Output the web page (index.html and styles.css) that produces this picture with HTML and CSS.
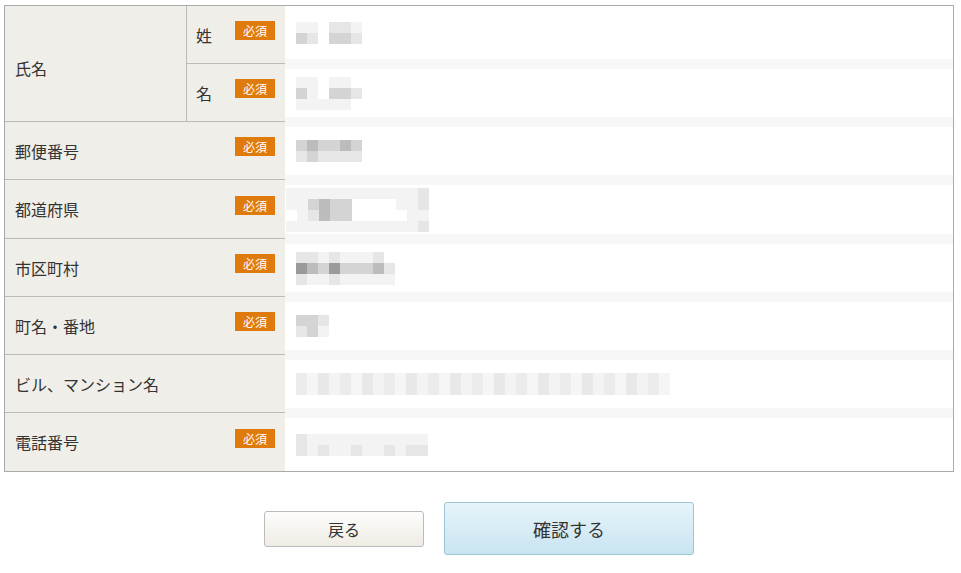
FILE: index.html
```html
<!DOCTYPE html>
<html lang="ja">
<head>
  <meta charset="UTF-8">
  <meta name="viewport" content="width=device-width, initial-scale=1.0">
  <title>お客様情報の入力</title>
  <link rel="stylesheet" href="styles.css">
</head>
<body>
  <div class="form">
    <div class="row row-name">
      <div class="label label-main">氏名</div>
      <div class="sub-rows">
        <div class="sub-row">
          <div class="label label-sub">姓<span class="req">必須</span></div>
          <div class="value first band-bottom">
            <div class="mask cols6">
              <span class="c1"></span><span class="c1"></span><span class="c0"></span><span class="c2"></span><span class="c2"></span><span class="c1"></span>
              <span class="c3"></span><span class="c2"></span><span class="c0"></span><span class="c3"></span><span class="c3"></span><span class="c2"></span>
            </div>
          </div>
        </div>
        <div class="sub-row">
          <div class="label label-sub">名<span class="req">必須</span></div>
          <div class="value band-top band-bottom">
            <div class="mask cols6">
              <span class="c1"></span><span class="c1"></span><span class="c0"></span><span class="c1"></span><span class="c1"></span><span class="c0"></span>
              <span class="c3"></span><span class="c1"></span><span class="c0"></span><span class="c3"></span><span class="c3"></span><span class="c2"></span>
              <span class="c1"></span><span class="c1"></span><span class="c1"></span><span class="c1"></span><span class="c1"></span><span class="c0"></span>
            </div>
          </div>
        </div>
      </div>
    </div>

    <div class="row">
      <div class="label">郵便番号<span class="req">必須</span></div>
      <div class="value band-top band-bottom">
        <div class="mask cols6">
          <span class="c3"></span><span class="c4"></span><span class="c3"></span><span class="c3"></span><span class="c4"></span><span class="c3"></span>
          <span class="c2"></span><span class="c3"></span><span class="c2"></span><span class="c2"></span><span class="c2"></span><span class="c2"></span>
        </div>
      </div>
    </div>

    <div class="row row-tall">
      <div class="label">都道府県<span class="req">必須</span></div>
      <div class="value band-top band-bottom wide">
        <div class="mask cols13">
          <span class="c1"></span><span class="c1"></span><span class="c1"></span><span class="c1"></span><span class="c1"></span><span class="c1"></span><span class="c1"></span><span class="c1"></span><span class="c1"></span><span class="c1"></span><span class="c1"></span><span class="c1"></span><span class="c2"></span>
          <span class="c1"></span><span class="c1"></span><span class="c3"></span><span class="c4"></span><span class="c3"></span><span class="c3"></span><span class="c0"></span><span class="c0"></span><span class="c0"></span><span class="c0"></span><span class="c1"></span><span class="c1"></span><span class="c2"></span>
          <span class="c0"></span><span class="c1"></span><span class="c2"></span><span class="c4"></span><span class="c3"></span><span class="c3"></span><span class="c0"></span><span class="c0"></span><span class="c0"></span><span class="c0"></span><span class="c0"></span><span class="c1"></span><span class="c1"></span>
          <span class="c1"></span><span class="c1"></span><span class="c1"></span><span class="c1"></span><span class="c1"></span><span class="c1"></span><span class="c1"></span><span class="c1"></span><span class="c1"></span><span class="c1"></span><span class="c1"></span><span class="c1"></span><span class="c2"></span>
        </div>
      </div>
    </div>

    <div class="row">
      <div class="label">市区町村<span class="req">必須</span></div>
      <div class="value band-top band-bottom">
        <div class="mask cols9">
          <span class="c2"></span><span class="c2"></span><span class="c1"></span><span class="c2"></span><span class="c1"></span><span class="c1"></span><span class="c1"></span><span class="c2"></span><span class="c0"></span>
          <span class="c5"></span><span class="c4"></span><span class="c3"></span><span class="c5"></span><span class="c3"></span><span class="c3"></span><span class="c3"></span><span class="c4"></span><span class="c2"></span>
          <span class="c2"></span><span class="c1"></span><span class="c1"></span><span class="c2"></span><span class="c1"></span><span class="c1"></span><span class="c1"></span><span class="c1"></span><span class="c1"></span>
        </div>
      </div>
    </div>

    <div class="row">
      <div class="label">町名・番地<span class="req">必須</span></div>
      <div class="value band-top band-bottom">
        <div class="mask cols3">
          <span class="c3"></span><span class="c3"></span><span class="c2"></span>
          <span class="c2"></span><span class="c3"></span><span class="c1"></span>
        </div>
      </div>
    </div>

    <div class="row">
      <div class="label">ビル、マンション名</div>
      <div class="value band-top band-bottom">
        <div class="mask mask-long"></div>
      </div>
    </div>

    <div class="row last">
      <div class="label">電話番号<span class="req">必須</span></div>
      <div class="value band-top">
        <div class="mask cols12">
          <span class="c2"></span><span class="c1"></span><span class="c1"></span><span class="c1"></span><span class="c1"></span><span class="c1"></span><span class="c1"></span><span class="c1"></span><span class="c1"></span><span class="c1"></span><span class="c1"></span><span class="c1"></span>
          <span class="c2"></span><span class="c1"></span><span class="c2"></span><span class="c1"></span><span class="c1"></span><span class="c2"></span><span class="c1"></span><span class="c1"></span><span class="c2"></span><span class="c1"></span><span class="c2"></span><span class="c2"></span>
        </div>
      </div>
    </div>
  </div>

  <div class="actions">
    <button class="btn btn-back">戻る</button>
    <button class="btn btn-confirm">確認する</button>
  </div>
</body>
</html>
```

FILE: styles.css
```css
body { margin: 0; padding: 5px 0 0 4px; font-family: "Noto Sans CJK JP", "Liberation Sans", sans-serif; color: #333; background: #fff; }

.form { width: 950px; box-sizing: border-box; border: 1px solid #aaa; }
.row { display: flex; height: 58px; }
.row-name { height: 116px; }
.row-tall { height: 59px; }

.label { width: 280px; box-sizing: border-box; display: flex; align-items: center; justify-content: space-between; padding: 0 10px; background: #f0eee8; border-bottom: 1px solid #bbb; font-size: 16px; }
.row.last > .label { border-bottom: none; }
.label-main { width: 182px; border-right: 1px solid #bbb; padding-top: 8px; }
.label-sub { width: 98px; }
.sub-rows { flex: 1; display: flex; flex-direction: column; }
.sub-row { display: flex; height: 58px; }
.sub-row .label { padding-left: 9px; }

.req { display: inline-block; width: 40px; height: 19px; line-height: 19px; text-align: center; background: #df7a0c; color: #fff; font-size: 12px; margin-bottom: 8px; }

.value { flex: 1; box-sizing: border-box; display: flex; align-items: center; padding-left: 11px; background: #fff; border-color: #f7f7f7; border-style: solid; border-width: 0; }
.band-top { border-top-width: 5px; }
.band-bottom { border-bottom-width: 5px; }
.value.first { border-top-width: 0; }
.value.wide { padding-left: 1px; }

.mask { display: grid; grid-auto-rows: 11px; }
.cols3 { grid-template-columns: repeat(3, 11px); }
.cols6 { grid-template-columns: repeat(6, 11px); }
.cols9 { grid-template-columns: repeat(9, 11px); }
.cols12 { grid-template-columns: repeat(12, 11px); }
.cols13 { grid-template-columns: repeat(13, 11px); }
.mask-long { width: 374px; height: 22px; background: repeating-linear-gradient(90deg, #ececec 0 11px, #f5f5f5 11px 22px, #e8e8e8 22px 33px, #f3f3f3 33px 44px); }
.c0 { background: #fff; }
.c1 { background: #f3f3f3; }
.c2 { background: #e6e6e6; }
.c3 { background: #d4d4d4; }
.c4 { background: #bcbcbc; }
.c5 { background: #9a9a9a; }

.actions { display: flex; justify-content: center; align-items: center; gap: 20px; margin-top: 30px; padding-right: 7px; }
.btn { font-family: inherit; color: #333; cursor: pointer; border-radius: 3px; }
.btn-back { width: 160px; height: 36px; font-size: 16px; border: 1px solid #bbb; background: linear-gradient(#fdfdfc, #efece4); }
.btn-confirm { width: 250px; height: 53px; font-size: 18px; border: 1px solid #9dc4d7; background: linear-gradient(#e6f4fa, #c9e4f1); }
```
